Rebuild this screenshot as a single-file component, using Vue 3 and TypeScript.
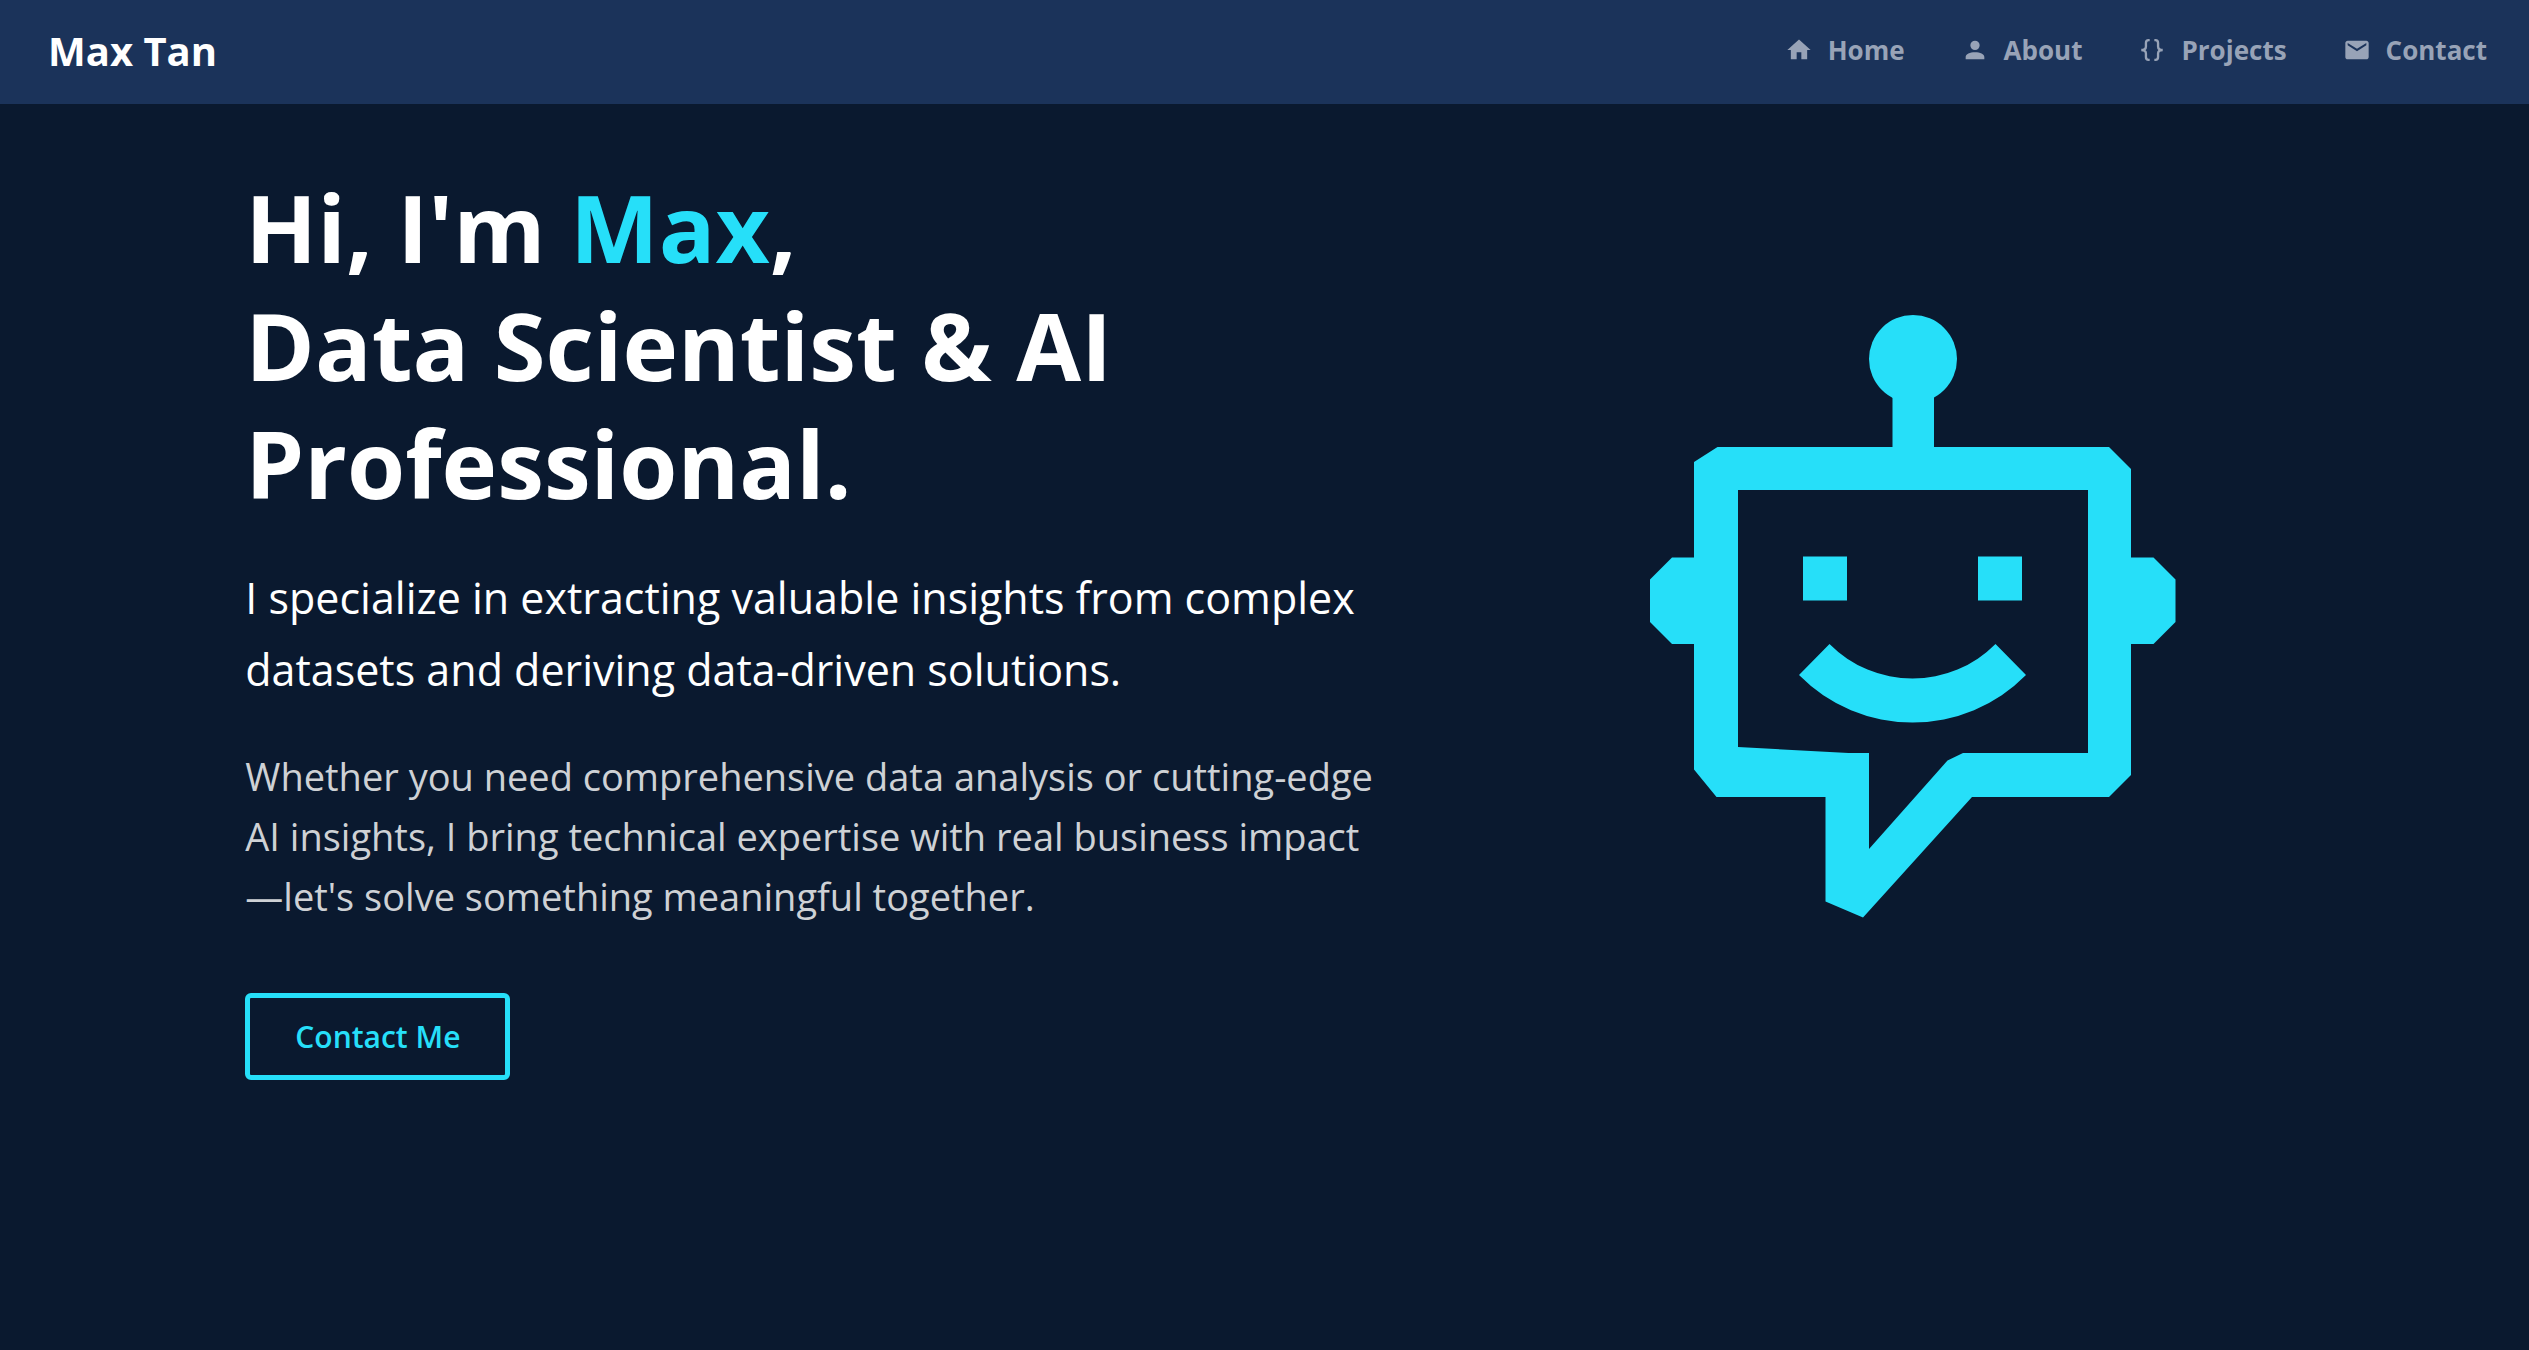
<script setup lang="ts">
interface NavItem {
  label: string
  href: string
  path: string
  stroked?: boolean
}

const navItems: NavItem[] = [
  { label: 'Home', href: '#home', path: 'M10 20v-6h4v6h5v-8h3L12 3 2 12h3v8z' },
  {
    label: 'About',
    href: '#about',
    path: 'M12 4a4 4 0 0 1 4 4 4 4 0 0 1-4 4 4 4 0 0 1-4-4 4 4 0 0 1 4-4m0 10c4.420 0 8 1.790 8 4v2H4v-2c0-2.210 3.580-4 8-4z',
  },
  {
    label: 'Projects',
    href: '#projects',
    stroked: true,
    path: 'M10 3.600H9Q6.800 3.600 6.800 6V9Q6.800 12 2.800 12Q6.800 12 6.800 15V18Q6.800 20.400 9 20.400H10M14 3.600H15Q17.200 3.600 17.200 6V9Q17.200 12 21.200 12Q17.200 12 17.200 15V18Q17.200 20.400 15 20.400H14',
  },
  {
    label: 'Contact',
    href: '#contact',
    path: 'M20 4H4c-1.100 0-2 .9-2 2v12c0 1.100.9 2 2 2h16c1.100 0 2-.9 2-2V6c0-1.100-.9-2-2-2zm0 4l-8 5-8-5V6l8 5 8-5v2z',
  },
]
</script>

<template>
  <div class="page">
    <header class="navbar">
      <a class="brand" href="#home">Max Tan</a>
      <nav class="links" aria-label="Main">
        <a v-for="item in navItems" :key="item.label" class="link" :href="item.href">
          <svg class="icon" :class="{ stroked: item.stroked }" viewBox="0 0 24 24" aria-hidden="true">
            <path :d="item.path" />
          </svg>
          <span>{{ item.label }}</span>
        </a>
      </nav>
    </header>

    <main id="home" class="hero">
      <section class="intro">
        <h1>Hi, I'm <span class="accent">Max</span>,<br />Data Scientist &amp; AI Professional.</h1>
        <p class="lead">
          I specialize in extracting valuable insights from complex datasets and deriving data-driven solutions.
        </p>
        <p class="detail">
          Whether you need comprehensive data analysis or cutting-edge AI insights, I bring technical expertise with
          real business impact—let's solve something meaningful together.
        </p>
        <button class="cta" type="button">Contact Me</button>
      </section>

      <svg class="robot" viewBox="0 0 526 603" role="img" aria-label="Smiling robot">
        <circle cx="263" cy="44" r="44" />
        <path
          fill-rule="evenodd"
          d="M242.500 75H284V132H459L481 154V242.500H503.500L525.500 264.500V307L503.500 329H481V460L459 482H322L213 602.500L175.500 586.500V482H66.500L44 454.500V329H22L0 307V264.500L22 242.500H44V147L67.500 132H242.500ZM88 175V432L198.500 438H219V534L297.500 445.500L313 438H438V175Z"
        />
        <path d="M153 241.500H197V285.500H153ZM328 241.500H372V285.500H328Z" />
        <path d="M149 360L179.500 329A116.800 116.800 0 0 0 345.500 329L376 360A159.300 159.300 0 0 1 149 360Z" />
      </svg>
    </main>
  </div>
</template>

<style>
body {
  margin: 0;
  background: #0a192f;
}
</style>

<style scoped>
.page {
  min-height: 100vh;
  background: #0a192f;
  color: #ffffff;
  font-family: 'Segoe UI', 'Open Sans', 'Noto Sans', sans-serif;
}

.navbar {
  display: flex;
  align-items: center;
  justify-content: space-between;
  box-sizing: border-box;
  height: 104px;
  padding: 0 42px 4px 48px;
  background: #1b335a;
}

.brand {
  color: #ffffff;
  font-size: 40px;
  font-weight: 700;
  text-decoration: none;
}

.links {
  display: flex;
  gap: 56px;
}

.link {
  display: flex;
  align-items: center;
  gap: 15px;
  color: #98a3b7;
  font-size: 26px;
  font-weight: 700;
  line-height: 40px;
  text-decoration: none;
}

.icon {
  width: 28px;
  height: 28px;
  fill: currentColor;
}

.stroked {
  fill: none;
  stroke: currentColor;
  stroke-width: 2;
}

.hero {
  display: grid;
  grid-template-columns: 7fr 4fr;
  padding: 64px 9.7% 0;
}

.intro {
  padding-right: 160px;
}

h1 {
  margin: 0;
  font-size: 94px;
  font-weight: 700;
  line-height: 118px;
}

.accent {
  color: #26dff9;
}

.lead {
  margin: 40px 0 0;
  font-size: 43px;
  line-height: 72px;
}

.detail {
  margin: 40px 0 0;
  color: #ced1d5;
  font-size: 38px;
  line-height: 60px;
}

.cta {
  display: block;
  margin-top: 67px;
  padding: 16px 45px;
  border: 5px solid #26dff9;
  border-radius: 6px;
  background: transparent;
  color: #26dff9;
  font-family: inherit;
  font-size: 30px;
  font-weight: 600;
  line-height: 45px;
}

.robot {
  justify-self: center;
  width: 526px;
  margin-top: 147px;
  fill: #26dff9;
}
</style>
